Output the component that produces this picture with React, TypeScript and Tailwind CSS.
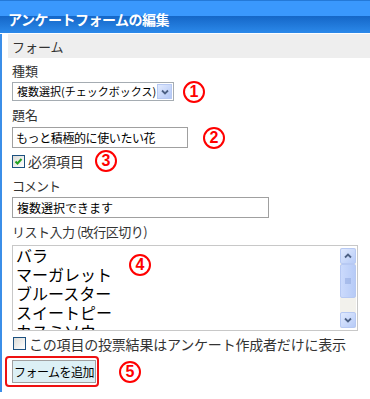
import React from "react";

const Circ = ({ n, className = "" }: { n: string; className?: string }) => (
  <div
    className={
      "flex h-[22px] w-[22px] shrink-0 items-center justify-center rounded-full border-2 border-[#ff0000] bg-white font-['Liberation_Sans',Arial,sans-serif] text-[16px] font-bold leading-none text-[#ff0000] " +
      className
    }
  >
    {n}
  </div>
);

const Check = ({ checked }: { checked?: boolean }) => (
  <div className="flex h-[13px] w-[13px] shrink-0 items-center justify-center border border-[#1c5180] bg-[linear-gradient(135deg,#dcdcd7,#ffffff)]">
    {checked && (
      <svg width="9" height="9" viewBox="0 0 9 9">
        <path d="M1.5 4.5 L3.5 6.5 L7.5 2" stroke="#21a121" strokeWidth="2" fill="none" />
      </svg>
    )}
  </div>
);

const SbBtn = ({ up }: { up?: boolean }) => (
  <div className="flex h-[16px] w-[16px] items-center justify-center rounded-[2px] border border-[#b7c9f3] bg-[linear-gradient(135deg,#e1eafe,#b7cbf7)]">
    <svg width="8" height="6" viewBox="0 0 8 6">
      <path d={up ? "M1 4.5 L4 1.5 L7 4.5" : "M1 1.5 L4 4.5 L7 1.5"} stroke="#4d6185" strokeWidth="1.8" fill="none" />
    </svg>
  </div>
);

export default function App() {
  return (
    <div className="h-[399px] w-[370px] overflow-hidden bg-white font-['Noto_Sans_CJK_JP',sans-serif] text-[#222]">
      <div className="flex h-[33px] items-center border-t border-[#2479d8] bg-[linear-gradient(to_bottom,#3a98fd_0%,#3a98fd_48%,#1567c8_48%,#2b89ea_100%)] pl-[8px] pt-[3px] text-[14px] font-bold leading-none tracking-[-0.5px] text-white">
        アンケートフォームの編集
      </div>
      <div className="mt-[1px] flex h-[358px]">
        <div className="w-[2px] bg-[#3b8ee8]" />
        <div className="flex-1 pl-[6px]">
          <div className="flex h-[24px] items-center bg-[#eeeeee] pl-[4px] text-[13px] leading-none text-[#333]">フォーム</div>
          <div className="flex flex-col pl-[4px]">
            <div className="flex h-[24px] items-center text-[13px] leading-none text-[#333]">種類</div>
            <div className="flex h-[19px] items-center gap-[9px]">
              <div className="flex h-[19px] w-[162px] items-center justify-between border border-[#a5acb2] bg-white pl-[4px] pr-[1px]">
                <span className="whitespace-nowrap text-[11px] leading-none text-black">複数選択(チェックボックス)</span>
                <div className="flex h-[15px] w-[15px] shrink-0 items-center justify-center border border-[#b7c9f3] bg-[linear-gradient(135deg,#e1eafe,#b4c8f6)]">
                  <svg width="8" height="6" viewBox="0 0 8 6">
                    <path d="M1 1.5 L4 4.5 L7 1.5" stroke="#4d6185" strokeWidth="1.8" fill="none" />
                  </svg>
                </div>
              </div>
              <Circ n="1" />
            </div>
            <div className="flex h-[26px] items-center text-[13px] leading-none text-[#333]">題名</div>
            <div className="flex h-[21px] items-center gap-[15px]">
              <div className="flex h-[21px] w-[176px] items-center border border-[#a0a0a0] pl-[3px] text-[12px] leading-none tracking-[-0.4px] text-black">
                もっと積極的に使いたい花
              </div>
              <Circ n="2" />
            </div>
            <div className="flex h-[26px] items-center">
              <Check checked />
              <span className="ml-[3px] text-[14px] leading-none text-[#333]">必須項目</span>
              <Circ n="3" className="ml-[11px]" />
            </div>
            <div className="flex h-[23px] items-center text-[13px] leading-none tracking-[-1px] text-[#333]">コメント</div>
            <div className="flex h-[21px] w-[257px] items-center border border-[#a0a0a0] pl-[4px] text-[12px] leading-none text-black">
              複数選択できます
            </div>
            <div className="flex h-[27px] items-center text-[13px] leading-none tracking-[-0.5px] text-[#333]">リスト入力 (改行区切り)</div>
            <div className="relative flex h-[86px] w-[346px] border border-[#c8c8c8]">
              <div className="flex-1 overflow-hidden pl-[3px] text-[16px] leading-[19px] text-black">
                <div>バラ</div>
                <div>マーガレット</div>
                <div>ブルースター</div>
                <div>スイートピー</div>
                <div>カスミソウ</div>
              </div>
              <div className="my-[2px] mr-[1px] flex w-[16px] flex-col bg-[#f2f1ec]">
                <SbBtn up />
                <div className="flex h-[34px] items-center justify-center rounded-[2px] border border-[#b7c9f3] bg-[linear-gradient(90deg,#cbdafc,#b7cbf7)]">
                  <svg width="6" height="7" viewBox="0 0 6 7">
                    <path d="M0 1H6M0 3H6M0 5H6" stroke="#8da5dc" strokeWidth="1" />
                  </svg>
                </div>
                <div className="flex-1" />
                <SbBtn />
              </div>
              <Circ n="4" className="absolute left-[116px] top-[8px]" />
            </div>
            <div className="flex h-[25px] items-center pl-[1px]">
              <Check />
              <span className="ml-[3px] text-[14px] leading-none tracking-[-0.2px] text-[#333]">この項目の投票結果はアンケート作成者だけに表示</span>
            </div>
            <div className="flex items-center">
              <div className="ml-[-7px] flex h-[31px] w-[94px] items-center rounded-[4px] border-2 border-[#ee1111] pl-[5px]">
                <div className="flex h-[23px] w-[84px] items-center justify-center border border-[#a0a0a0] bg-[#dcf0f5] text-[12px] leading-none tracking-[-0.5px] text-black">
                  フォームを追加
                </div>
              </div>
              <Circ n="5" className="ml-[20px]" />
            </div>
          </div>
        </div>
      </div>
    </div>
  );
}
